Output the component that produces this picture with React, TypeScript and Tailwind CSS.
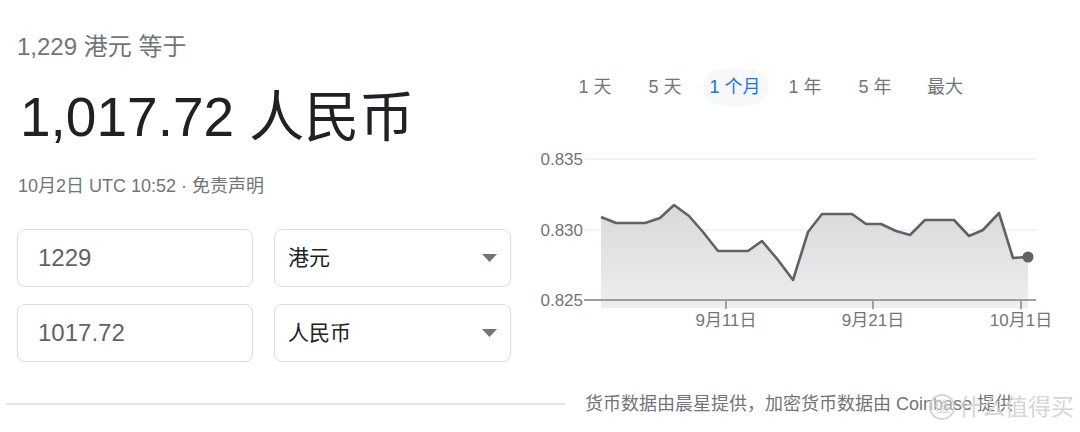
import React from 'react';

const FONT = '"Liberation Sans", Arial, "Noto Sans CJK SC", sans-serif';

const ranges = ['1 天', '5 天', '1 个月', '1 年', '5 年', '最大'];

// rate points in chart coordinates (x, y)
const points: [number, number][] = [
  [71, 77], [86, 83], [115, 83], [130, 78], [144, 65], [159, 76], [173, 92],
  [188, 111], [218, 111], [232, 101], [248, 120], [263, 140], [278, 92],
  [292, 74], [322, 74], [336, 84], [351, 84], [366, 91], [380, 95], [395, 80],
  [424, 80], [439, 96], [453, 90], [469, 73], [483, 118], [498, 117],
];

function RateChart() {
  const line = points.map(([x, y]) => `${x},${y}`).join(' ');
  const area = `71,168 ${line} 498,168`;
  const yTicks = [
    { y: 19, label: '0.835' },
    { y: 90, label: '0.830' },
  ];
  const xTicks = [
    { x: 196, label: '9月11日' },
    { x: 343, label: '9月21日' },
    { x: 491, label: '10月1日' },
  ];
  return (
    <svg width="540" height="200" viewBox="0 0 540 200" style={{ fontFamily: FONT }}>
      <defs>
        <linearGradient id="area" x1="0" y1="0" x2="0" y2="1">
          <stop offset="0%" stopColor="#d8d9db" />
          <stop offset="100%" stopColor="#eeeeef" />
        </linearGradient>
      </defs>
      {yTicks.map((t) => (
        <line key={t.label} x1="54" x2="506" y1={t.y} y2={t.y} stroke="#f1f3f4" strokeWidth="2" />
      ))}
      <polygon points={area} fill="url(#area)" />
      <polyline points={line} fill="none" stroke="#5f6368" strokeWidth="2.6" strokeLinejoin="round" />
      <circle cx="498" cy="117" r="5.5" fill="#5f6368" />
      <line x1="54" x2="506" y1="160" y2="160" stroke="#9aa0a6" strokeWidth="2" />
      {xTicks.map((t) => (
        <g key={t.label}>
          <line x1={t.x} x2={t.x} y1="160" y2="169" stroke="#9aa0a6" strokeWidth="2" />
          <text x={t.x} y="186" textAnchor="middle" fontSize="17" fill="#70757a">
            {t.label}
          </text>
        </g>
      ))}
      {[...yTicks, { y: 160, label: '0.825' }].map((t) => (
        <text key={t.label} x="53" y={t.y + 6} textAnchor="end" fontSize="17" fill="#70757a">
          {t.label}
        </text>
      ))}
    </svg>
  );
}

function Field({ value, select }: { value: string; select?: boolean }) {
  if (select) {
    return (
      <div className="h-[58px] rounded-[8px] border border-[#dadce0] flex items-center justify-between pl-[13px] pr-[13px]">
        <span className="text-[21px] text-[#202124]">{value}</span>
        <svg width="15" height="8" viewBox="0 0 15 8">
          <path d="M0 0h15L7.5 8z" fill="#70757a" />
        </svg>
      </div>
    );
  }
  return (
    <div className="h-[58px] rounded-[8px] border border-[#dadce0] flex items-center pl-[20px]">
      <span className="text-[24px] text-[#5f6368]">{value}</span>
    </div>
  );
}

export default function App() {
  return (
    <div className="w-[1080px] h-[432px] bg-white relative overflow-hidden flex flex-col" style={{ fontFamily: FONT }}>
      <div className="flex h-[380px]">
        {/* converter */}
        <div className="w-[530px] pl-[17px] pr-[19px]">
          <p className="mt-[31px] text-[24px] leading-[32px] text-[#70757a]">1,229 港元 等于</p>
          <p className="mt-[22px] text-[55px] leading-[64px] text-[#202124] pl-[3px]">1,017.72 人民币</p>
          <p className="mt-[25px] text-[18px] leading-[24px] text-[#70757a] pl-[1px]">10月2日 UTC 10:52 · 免责声明</p>
          <div className="mt-[31px] grid grid-cols-[236px_237px] gap-x-[21px] gap-y-[17px]">
            <Field value="1229" />
            <Field value="港元" select />
            <Field value="1017.72" />
            <Field value="人民币" select />
          </div>
        </div>

        {/* chart */}
        <div className="flex-1">
          <div className="mt-[69px] pl-[30px] flex">
            {ranges.map((r) => (
              <div key={r} className="w-[70px] h-[37px] flex items-center justify-center">
                {r === '1 个月' ? (
                  <span className="w-[65px] h-[37px] rounded-full bg-[#f6f8fa] flex items-center justify-center text-[18px] text-[#1a73e8]">
                    {r}
                  </span>
                ) : (
                  <span className="text-[18px] text-[#70757a]">{r}</span>
                )}
              </div>
            ))}
          </div>
          <div className="mt-[34px]">
            <RateChart />
          </div>
        </div>
      </div>

      <div className="h-[48px] flex items-center pl-[6px]">
        <div className="w-[559px] h-[2px] bg-[#e3e5e8]" />
        <p className="ml-[20px] text-[18px] text-[#70757a] whitespace-nowrap">
          货币数据由晨星提供，加密货币数据由 Coinbase 提供
        </p>
      </div>

      {/* watermark */}
      <div className="absolute right-[6px] bottom-[11px] flex items-center gap-[4px] text-[#d2d2d2] opacity-90">
        <span className="w-[26px] h-[26px] rounded-full border-2 border-[#d2d2d2] flex items-center justify-center text-[15px] bg-white/40">
          值
        </span>
        <span className="text-[23px] leading-[28px]">什么值得买</span>
      </div>
    </div>
  );
}
